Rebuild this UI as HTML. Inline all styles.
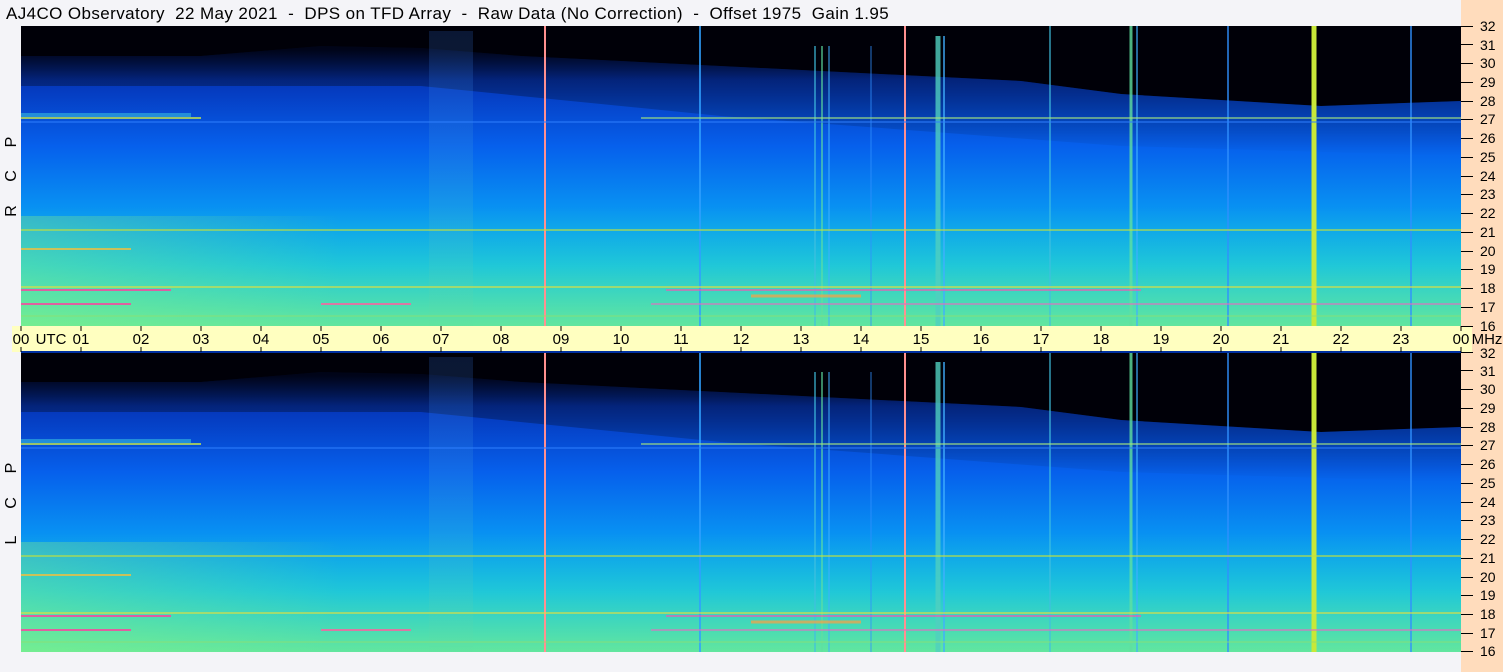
<!DOCTYPE html>
<html><head><meta charset="utf-8"><style>
html,body{margin:0;padding:0;background:#f4f4f8;}
body{width:1503px;height:672px;overflow:hidden;position:relative;font-family:"Liberation Sans",sans-serif;}
</style></head><body>
<svg width="1503" height="672" xmlns="http://www.w3.org/2000/svg" style="position:absolute;left:0;top:0">
<defs>
<linearGradient id="vg" x1="0" y1="0" x2="0" y2="1">
<stop offset="0" stop-color="#000010"/>
<stop offset="0.08" stop-color="#000830"/>
<stop offset="0.18" stop-color="#0535b8"/>
<stop offset="0.4" stop-color="#0660ec"/>
<stop offset="0.6" stop-color="#0890f2"/>
<stop offset="0.8" stop-color="#0abcea"/>
<stop offset="1" stop-color="#38d8c0"/>
</linearGradient>
<linearGradient id="dk" x1="0" y1="0" x2="0" y2="1">
<stop offset="0" stop-color="#000" stop-opacity="0.8"/>
<stop offset="1" stop-color="#000" stop-opacity="0"/>
</linearGradient>
<linearGradient id="col" x1="0" y1="0" x2="0" y2="1">
<stop offset="0" stop-color="#3a80ff"/>
<stop offset="1" stop-color="#60e0a0"/>
</linearGradient>
<linearGradient id="gl" x1="0" y1="0" x2="0" y2="1">
<stop offset="0" stop-color="#60ffa0" stop-opacity="0"/>
<stop offset="1" stop-color="#b0ff60" stop-opacity="0.35"/>
</linearGradient>
<linearGradient id="lg" x1="0" y1="0" x2="1" y2="0">
<stop offset="0" stop-color="#a0ff70" stop-opacity="0.3"/>
<stop offset="1" stop-color="#a0ff70" stop-opacity="0"/>
</linearGradient>
<g id="p">
<rect width="1440" height="300" fill="url(#vg)"/>
<rect x="0" y="180" width="1440" height="120" fill="url(#gl)"/>
<rect x="0" y="190" width="320" height="110" fill="url(#lg)"/>
<path d="M0 0H1440V75L1300 80 1100 68 1000 55 800 45 600 35 500 30 400 22 300 20 180 30 0 30Z" fill="#000008"/>
<path d="M0 30L180 30 300 20 400 22 500 30 600 35 800 45 1000 55 1100 68 1300 80 1440 75V130L1100 120 700 90 400 60 0 60Z" fill="url(#dk)" opacity="0.6"/>
<rect x="408" y="5" width="44" height="295" fill="url(#col)" opacity="0.18"/>
<g stroke-width="2">
<line x1="679" y1="0" x2="679" y2="300" stroke="#30a0ff" opacity="0.8"/>
<line x1="794" y1="20" x2="794" y2="300" stroke="#40c0e0" opacity="0.6"/>
<line x1="801" y1="20" x2="801" y2="300" stroke="#60e0a0" opacity="0.6"/>
<line x1="808" y1="20" x2="808" y2="300" stroke="#40b0ff" opacity="0.5"/>
<line x1="850" y1="20" x2="850" y2="300" stroke="#3090ff" opacity="0.4"/>
<line x1="917" y1="10" x2="917" y2="300" stroke="#50d0c0" stroke-width="5" opacity="0.8"/>
<line x1="923" y1="10" x2="923" y2="300" stroke="#40b0ff" opacity="0.7"/>
<line x1="1029" y1="0" x2="1029" y2="300" stroke="#40c0e0" opacity="0.6"/>
<line x1="1110" y1="0" x2="1110" y2="300" stroke="#60e0a0" stroke-width="3" opacity="0.8"/>
<line x1="1116" y1="0" x2="1116" y2="300" stroke="#40b0ff" opacity="0.6"/>
<line x1="1207" y1="0" x2="1207" y2="300" stroke="#3090ff" opacity="0.7"/>
<line x1="1293" y1="0" x2="1293" y2="300" stroke="#c8e838" stroke-width="5"/>
<line x1="1390" y1="0" x2="1390" y2="300" stroke="#3090ff" opacity="0.7"/>
<line x1="524" y1="0" x2="524" y2="300" stroke="#ff9090" stroke-width="2"/>
<line x1="884" y1="0" x2="884" y2="300" stroke="#ff9090" stroke-width="2"/>
</g>
<g stroke-width="2">
<line x1="0" y1="92" x2="180" y2="92" stroke="#c0e050" opacity="0.8"/>
<line x1="0" y1="89" x2="170" y2="89" stroke="#40d0e0" stroke-width="4" opacity="0.5"/>
<line x1="620" y1="92" x2="1440" y2="92" stroke="#a0e080" opacity="0.6"/>
<line x1="0" y1="96" x2="1440" y2="96" stroke="#3080ff" opacity="0.5"/>
<line x1="0" y1="204" x2="1440" y2="204" stroke="#c0e040" opacity="0.6"/>
<line x1="0" y1="223" x2="110" y2="223" stroke="#f0c040" opacity="0.8"/>
<line x1="0" y1="261" x2="1440" y2="261" stroke="#e0e040" opacity="0.6"/>
<line x1="0" y1="264" x2="150" y2="264" stroke="#ff40a0" opacity="0.8"/>
<line x1="645" y1="264" x2="1120" y2="264" stroke="#ff50b0" opacity="0.6"/>
<line x1="0" y1="278" x2="110" y2="278" stroke="#ff40a0" opacity="0.8"/>
<line x1="300" y1="278" x2="390" y2="278" stroke="#ff60a0" opacity="0.8"/>
<line x1="630" y1="278" x2="1440" y2="278" stroke="#e070c0" opacity="0.6"/>
<line x1="730" y1="270" x2="840" y2="270" stroke="#ffa040" stroke-width="3" opacity="0.7"/>
<line x1="0" y1="290" x2="1440" y2="290" stroke="#90e070" opacity="0.4"/>
</g>
</g>
</defs>
<rect x="1461" y="0" width="42" height="672" fill="#ffdcbc"/>
<text x="6" y="19" font-size="17" letter-spacing="0.4" fill="#000" font-family="Liberation Sans, sans-serif" xml:space="preserve">AJ4CO Observatory  22 May 2021  -  DPS on TFD Array  -  Raw Data (No Correction)  -  Offset 1975  Gain 1.95</text>
<use href="#p" x="21" y="26"/>
<use href="#p" x="21" y="352"/>
<rect x="12" y="326" width="1460" height="26" fill="#ffffc0"/>
<line x1="21" y1="352" x2="1461" y2="352" stroke="#0030a0" stroke-width="2"/>
<g font-size="16" fill="#000" font-family="Liberation Sans, sans-serif" text-anchor="middle">
<text transform="translate(16,142) rotate(-90)">P</text>
<text transform="translate(16,176) rotate(-90)">C</text>
<text transform="translate(16,211) rotate(-90)">R</text>
<text transform="translate(16,468) rotate(-90)">P</text>
<text transform="translate(16,503) rotate(-90)">C</text>
<text transform="translate(16,540) rotate(-90)">L</text>
</g>
<g font-size="15" fill="#000" font-family="Liberation Sans, sans-serif" text-anchor="middle">
<text x="21" y="344">00</text><text x="51" y="344">UTC</text>
<text x="81" y="344">01</text><text x="141" y="344">02</text><text x="201" y="344">03</text><text x="261" y="344">04</text><text x="321" y="344">05</text><text x="381" y="344">06</text><text x="441" y="344">07</text><text x="501" y="344">08</text><text x="561" y="344">09</text><text x="621" y="344">10</text><text x="681" y="344">11</text><text x="741" y="344">12</text><text x="801" y="344">13</text><text x="861" y="344">14</text><text x="921" y="344">15</text><text x="981" y="344">16</text><text x="1041" y="344">17</text><text x="1101" y="344">18</text><text x="1161" y="344">19</text><text x="1221" y="344">20</text><text x="1281" y="344">21</text><text x="1341" y="344">22</text><text x="1401" y="344">23</text><text x="1461" y="344">00</text><text x="1487" y="344">MHz</text>
</g>
<g stroke="#000">
<path d="M21 326v5M81 326v5M141 326v5M201 326v5M261 326v5M321 326v5M381 326v5M441 326v5M501 326v5M561 326v5M621 326v5M681 326v5M741 326v5M801 326v5M861 326v5M921 326v5M981 326v5M1041 326v5M1101 326v5M1161 326v5M1221 326v5M1281 326v5M1341 326v5M1401 326v5M1461 326v5"/>
<path d="M21 352v-5M81 352v-5M141 352v-5M201 352v-5M261 352v-5M321 352v-5M381 352v-5M441 352v-5M501 352v-5M561 352v-5M621 352v-5M681 352v-5M741 352v-5M801 352v-5M861 352v-5M921 352v-5M981 352v-5M1041 352v-5M1101 352v-5M1161 352v-5M1221 352v-5M1281 352v-5M1341 352v-5M1401 352v-5M1461 352v-5"/>
<path d="M1461 26.5h12M1461 44.5h12M1461 63.5h12M1461 82.5h12M1461 101.5h12M1461 119.5h12M1461 138.5h12M1461 157.5h12M1461 176.5h12M1461 194.5h12M1461 213.5h12M1461 232.5h12M1461 251.5h12M1461 269.5h12M1461 288.5h12M1461 307.5h12M1461 326.5h12"/>
<path d="M1461 352.5h12M1461 370.5h12M1461 389.5h12M1461 408.5h12M1461 427.5h12M1461 445.5h12M1461 464.5h12M1461 483.5h12M1461 502.5h12M1461 520.5h12M1461 539.5h12M1461 558.5h12M1461 577.5h12M1461 595.5h12M1461 614.5h12M1461 633.5h12M1461 651.5h12"/>
</g>
<g font-size="14" fill="#000" font-family="Liberation Sans, sans-serif">
<text x="1480" y="31">32</text><text x="1480" y="50">31</text><text x="1480" y="68">30</text><text x="1480" y="87">29</text><text x="1480" y="106">28</text><text x="1480" y="124">27</text><text x="1480" y="143">26</text><text x="1480" y="162">25</text><text x="1480" y="181">24</text><text x="1480" y="199">23</text><text x="1480" y="218">22</text><text x="1480" y="237">21</text><text x="1480" y="256">20</text><text x="1480" y="274">19</text><text x="1480" y="293">18</text><text x="1480" y="312">17</text><text x="1480" y="331">16</text>
<text x="1480" y="358">32</text><text x="1480" y="376">31</text><text x="1480" y="394">30</text><text x="1480" y="413">29</text><text x="1480" y="432">28</text><text x="1480" y="450">27</text><text x="1480" y="469">26</text><text x="1480" y="488">25</text><text x="1480" y="507">24</text><text x="1480" y="525">23</text><text x="1480" y="544">22</text><text x="1480" y="563">21</text><text x="1480" y="582">20</text><text x="1480" y="600">19</text><text x="1480" y="619">18</text><text x="1480" y="638">17</text><text x="1480" y="656">16</text>
</g>
</svg>
</body></html>
